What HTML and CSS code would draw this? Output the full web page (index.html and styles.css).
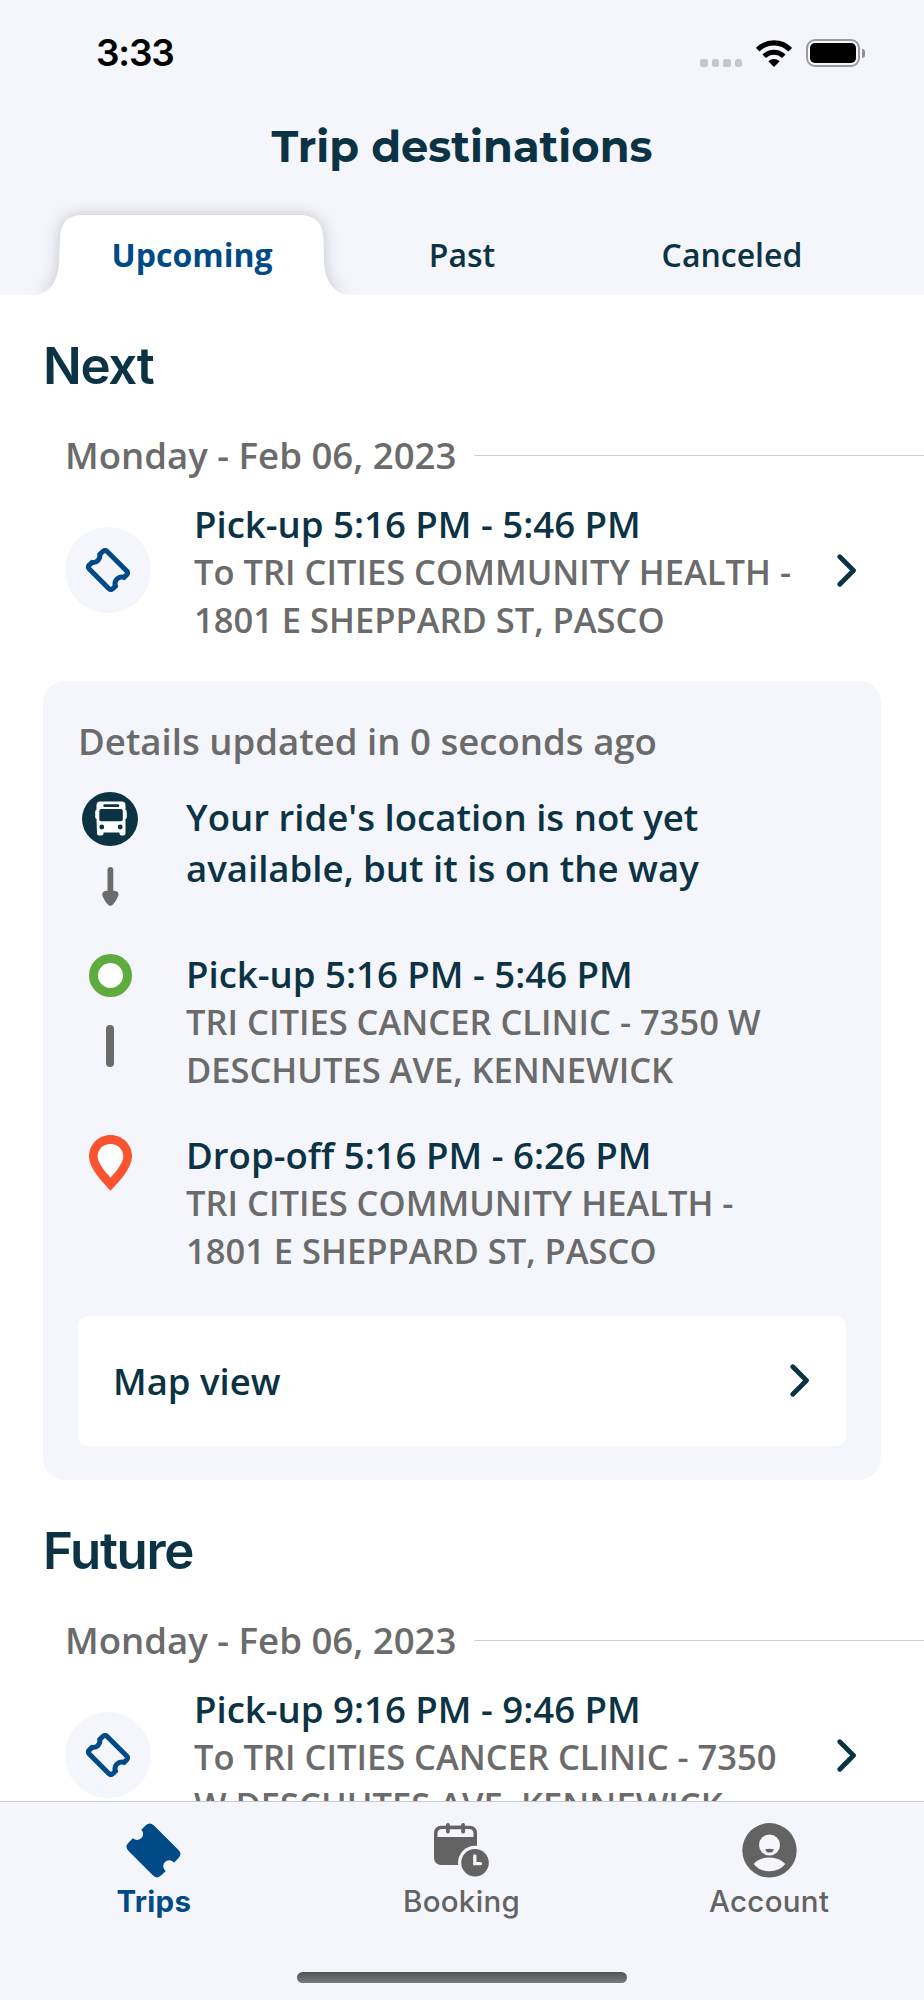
FILE: index.html
```
<!DOCTYPE html>
<html lang="en">
<head>
    <meta charset="UTF-8">
    <meta name="viewport" content="width=device-width, initial-scale=1.0">
    <title>Trip destinations</title>
    <link rel="stylesheet" href="styles.css">
</head>
<body>

<!-- Shared icons -->
<svg class="icon-defs" width="0" height="0">
    <symbol id="icon-ticket" viewBox="0 0 55 55">
        <path d="M17.2 8.2L21 4.4Q23.7 1.8 26.5 4.4L50.6 28.4Q53.2 31 50.6 33.8L47.6 36.8A8.4 8.4 0 0 0 36.8 47.6L33.8 50.6Q31 53.2 28.4 50.6L4.4 26.5Q1.8 23.7 4.4 21L7.6 18A8.4 8.4 0 0 0 17.2 8.2Z" fill="none" stroke="#004b87" stroke-width="6.3"/>
    </symbol>
    <symbol id="icon-chevron" viewBox="0 0 20 33">
        <path d="M2.8 2.8L16.5 16.5L2.8 30.2" fill="none" stroke="#0b3344" stroke-width="4.8" stroke-linecap="round" stroke-linejoin="round"/>
    </symbol>
</svg>

<div class="app">

    <!-- Header -->
    <header class="header">
        <div class="status-bar">
            <span class="clock">3:33</span>
            <div class="status-icons">
                <div class="signal"><i></i><i></i><i></i><i></i></div>
                <svg class="wifi" width="36" height="27" viewBox="0 0 36 27">
                    <path d="M1.7 9.7A22.8 22.8 0 0 1 34.3 9.7" fill="none" stroke="#000" stroke-width="5.2"/>
                    <path d="M8.2 16.3A13.8 13.8 0 0 1 27.8 16.3" fill="none" stroke="#000" stroke-width="5"/>
                    <path d="M18 27L12.3 21.3Q18 16.6 23.7 21.3Z"/>
                </svg>
                <div class="battery"><div class="battery-level"></div></div>
                <div class="battery-cap"></div>
            </div>
        </div>
        <h1>Trip destinations</h1>
        <nav class="tabs">
            <a class="tab active">
                <svg class="tab-shape" width="354" height="110" viewBox="15 185 354 110">
                    <path d="M33 295C50 294.5 58 281 59 262L60 240C60.500 222 68 215 84 215H298C315 215 323 222 323.500 240L324 262C325 281 334 294.500 350 295Z" fill="#fff"/>
                </svg>
                <span>Upcoming</span>
            </a>
            <a class="tab">Past</a>
            <a class="tab">Canceled</a>
        </nav>
    </header>

    <!-- Trips list -->
    <main class="content">
        <section class="section">
            <h2>Next</h2>
            <div class="date"><span>Monday - Feb 06, 2023</span></div>
            <div class="trip">
                <div class="trip-icon"><svg width="44" height="44"><use href="#icon-ticket"/></svg></div>
                <div class="trip-text">
                    <p class="time">Pick-up 5:16 PM - 5:46 PM</p>
                    <p class="address">To TRI CITIES COMMUNITY HEALTH -<br>1801 E SHEPPARD ST, PASCO</p>
                </div>
                <svg class="chevron" width="20" height="33"><use href="#icon-chevron"/></svg>
            </div>

            <div class="details">
                <p class="updated">Details updated in 0 seconds ago</p>
                <div class="step step-ride">
                    <div class="step-icon">
                        <svg width="56" height="54" viewBox="0 0 56 54">
                            <ellipse cx="28" cy="27" rx="28" ry="27" fill="#0b3344"/>
                            <path d="M18 9.500H40Q43.300 9.500 43.500 13V17.500Q44.800 18 44.800 20V25Q44.800 26.500 43.500 27V41.500Q43.500 43.500 41.500 43.500H39.500Q37.500 43.500 37.500 41.500V40.500H21.500V41.500Q21.500 43.500 19.500 43.500H17Q15 43.500 15 41.500L14.500 27Q13.200 26.500 13.200 25V20Q13.200 18 14.500 17.500V13Q14.700 9.500 18 9.500Z" fill="#fff"/>
                            <rect x="21.300" y="12.300" width="16" height="2.700" rx="1.300" fill="#0b3344"/>
                            <rect x="17.300" y="17" width="23.500" height="12.200" rx="2" fill="#0b3344"/>
                            <circle cx="19.800" cy="35" r="2.400" fill="#0b3344"/>
                            <circle cx="38.200" cy="35" r="2.400" fill="#0b3344"/>
                        </svg>
                        <svg class="arrow" width="17" height="39" viewBox="0 0 17 39">
                            <rect x="5.500" y="0" width="5.800" height="28" rx="2.900" fill="#6b6b6b"/>
                            <path d="M4 23.800H12.600Q17.500 24.500 16.300 29Q14 34 11.200 37.300Q8.400 40.300 5.600 37.300Q2.500 34 .5 29Q-.7 24.500 4 23.800Z" fill="#6b6b6b"/>
                        </svg>
                    </div>
                    <p class="ride-status">Your ride's location is not yet<br>available, but it is on the way</p>
                </div>
                <div class="step">
                    <div class="step-icon">
                        <div class="ring"></div>
                        <div class="bar"></div>
                    </div>
                    <div class="step-text">
                        <p class="time">Pick-up 5:16 PM - 5:46 PM</p>
                        <p class="address">TRI CITIES CANCER CLINIC - 7350 W<br>DESCHUTES AVE, KENNEWICK</p>
                    </div>
                </div>
                <div class="step">
                    <div class="step-icon">
                        <svg width="43" height="56" viewBox="0 0 43 56">
                            <path d="M21.500 0C33.500 0 43 9.500 43 21.500C43 32 32 45 21.500 55.700C11 45 0 32 0 21.500C0 9.500 9.500 0 21.500 0Z" fill="#f9532f"/>
                            <path d="M21.500 9C28.700 9 34.300 14.300 34.300 21.500C34.300 27.500 27.500 36 21.500 42.700C15.500 36 8.600 27.500 8.600 21.500C8.600 14.300 14.300 9 21.500 9Z" fill="#fff"/>
                        </svg>
                    </div>
                    <div class="step-text">
                        <p class="time">Drop-off 5:16 PM - 6:26 PM</p>
                        <p class="address">TRI CITIES COMMUNITY HEALTH -<br>1801 E SHEPPARD ST, PASCO</p>
                    </div>
                </div>
                <div class="map-view">
                    <span>Map view</span>
                    <svg class="chevron" width="20" height="33"><use href="#icon-chevron"/></svg>
                </div>
            </div>
        </section>

        <section class="section">
            <h2>Future</h2>
            <div class="date"><span>Monday - Feb 06, 2023</span></div>
            <div class="trip">
                <div class="trip-icon"><svg width="44" height="44"><use href="#icon-ticket"/></svg></div>
                <div class="trip-text">
                    <p class="time">Pick-up 9:16 PM - 9:46 PM</p>
                    <p class="address">To TRI CITIES CANCER CLINIC - 7350<br>W DESCHUTES AVE, KENNEWICK</p>
                </div>
                <svg class="chevron" width="20" height="33"><use href="#icon-chevron"/></svg>
            </div>
        </section>
    </main>

    <!-- Bottom navigation -->
    <footer class="bottom-bar">
        <nav class="bottom-nav">
            <a class="nav-item active">
                <svg width="55" height="55" viewBox="0 0 55 55">
                    <path d="M15.300 6.700L19.500 2.500Q23.700 -1.700 28 2.500L52.300 26.800Q56.600 31 52.300 35.300L48 39.800A5.900 5.900 0 1 0 39.800 48L35.300 52.300Q31 56.600 26.800 52.300L2.600 28Q-1.700 23.700 2.600 19.400L7 15.200A5.900 5.900 0 1 0 15.300 6.700Z" fill="#004b87"/>
                </svg>
                <span>Trips</span>
            </a>
            <a class="nav-item">
                <svg width="55" height="55" viewBox="0 0 55 55">
                    <rect y="2.700" width="43" height="39.300" rx="7" fill="#636363"/>
                    <path d="M3.500 14V10.500Q3.500 6 8 6H35Q39.500 6 39.500 10.500V14Z" fill="#f5f6fc"/>
                    <rect x="12" y="0" width="3.800" height="10.500" rx="1.800" fill="#636363"/>
                    <rect x="27.200" y="0" width="3.800" height="10.500" rx="1.800" fill="#636363"/>
                    <path d="M13.500 4.500H29.500" stroke="#636363" stroke-width="3.500"/>
                    <circle cx="41" cy="39.800" r="17" fill="#f5f6fc"/>
                    <circle cx="41" cy="39.800" r="13.800" fill="#636363"/>
                    <path d="M40.800 33V40.600H46.500" fill="none" stroke="#f5f6fc" stroke-width="3.300" stroke-linecap="round"/>
                </svg>
                <span>Booking</span>
            </a>
            <a class="nav-item">
                <svg width="55" height="55" viewBox="0 0 55 55">
                    <circle cx="27.500" cy="27.300" r="27.200" fill="#636363"/>
                    <circle cx="27.500" cy="22" r="10.500" fill="#f5f6fc"/>
                    <path d="M23 26.500Q27.500 25 32 26.500Q31 29.600 27.500 29.600Q24 29.600 23 26.500Z" fill="#636363"/>
                    <path d="M11.700 41Q17.500 34.500 27.500 34.500T43.300 41Q37.500 48.300 27.500 48.300T11.700 41Z" fill="#f5f6fc"/>
                </svg>
                <span>Account</span>
            </a>
        </nav>
        <div class="home-indicator"></div>
    </footer>
</div>

</body>
</html>
```

FILE: styles.css
```
* {
    box-sizing: border-box;
}

body {
    margin: 0;
    font-family: "Open Sans", "Noto Sans", sans-serif;
    font-weight: 600;
    color: #0b3344;
    background-color: #fff;
}

h1, h2, p {
    margin: 0;
}

svg {
    display: block;
    flex-shrink: 0;
}

.icon-defs {
    position: absolute;
}

.app {
    display: flex;
    flex-direction: column;
    height: 2000px;
    overflow: hidden;
}

/* Header */
.header {
    flex-shrink: 0;
    height: 294.5px;
    background-color: #f5f6fc;
}

.status-bar {
    display: flex;
    justify-content: space-between;
    align-items: center;
    height: 106px;
    padding: 0 59px 0 96px;
}

.clock {
    font-family: Inter, sans-serif;
    font-size: 37px;
    font-weight: 600;
    line-height: 106px;
    letter-spacing: -1.2px;
    color: #000;
}

.status-icons {
    display: flex;
    align-items: center;
    height: 28px;
}

.signal {
    display: flex;
    gap: 4px;
    align-self: flex-end;
    margin-right: 14px;
}

.signal i {
    width: 7.5px;
    height: 8px;
    border-radius: 2.5px;
    background-color: #c6c7cb;
}

.wifi {
    margin-right: 14px;
}

.battery {
    width: 54px;
    height: 28px;
    padding: 2px;
    border: 2px solid #9b9ca0;
    border-radius: 9px;
}

.battery-level {
    height: 100%;
    border-radius: 5px;
    background-color: #000;
}

.battery-cap {
    width: 3px;
    height: 9px;
    margin-left: 2px;
    border-radius: 0 3px 3px 0;
    background-color: #8e8f92;
}

h1 {
    height: 82px;
    font-family: Montserrat, Inter, sans-serif;
    font-size: 43.2px;
    font-weight: 700;
    line-height: 82px;
    text-align: center;
}

.tabs {
    display: grid;
    grid-template-columns: repeat(3, 270px);
    justify-content: center;
    padding-top: 27px;
}

.tab {
    position: relative;
    height: 79.5px;
    font-size: 32px;
    line-height: 79.5px;
    text-align: center;
}

.tab.active {
    font-weight: 700;
    color: #004b87;
}

.tab.active span {
    position: relative;
}

.tab-shape {
    position: absolute;
    left: -42px;
    top: -30px;
    filter: drop-shadow(0 0 8px rgba(0, 0, 0, 0.2));
}

/* Trips list */
.content {
    position: relative;
    flex: 1;
    min-height: 0;
    overflow: hidden;
    background-color: #fff;
}

.section {
    padding-top: 40px;
}

.section + .section {
    padding-top: 39.5px;
}

h2 {
    padding-left: 43px;
    font-family: Inter, sans-serif;
    font-size: 51px;
    font-weight: 600;
    line-height: 62px;
    letter-spacing: -1.3px;
}

.date {
    display: flex;
    align-items: center;
    gap: 18px;
    margin-top: 33.5px;
    padding-left: 65px;
    font-size: 36.6px;
    line-height: 50px;
    color: #6b6b6b;
}

.date::after {
    content: "";
    flex: 1;
    height: 1px;
    background-color: #d0d0d0;
}

.trip {
    display: flex;
    align-items: center;
    margin-top: 18.5px;
    padding: 0 67px 0 65px;
}

.trip-icon {
    display: flex;
    justify-content: center;
    align-items: center;
    width: 86px;
    height: 86px;
    margin-bottom: 1px;
    border-radius: 50%;
    background-color: #f5f6fc;
}

.trip-text {
    flex: 1;
    margin-left: 43px;
    padding-top: 1px;
    white-space: nowrap;
}

.time {
    font-size: 36.6px;
    line-height: 48.5px;
}

.address {
    font-size: 34.5px;
    line-height: 47.5px;
    color: #6b6b6b;
}

/* Ride details */
.details {
    margin: 37.5px 43px 0;
    padding: 35.5px 35px 34.5px;
    border-radius: 22px;
    background-color: #f5f6fc;
}

.updated {
    font-size: 36.6px;
    line-height: 50px;
    color: #6b6b6b;
}

.step {
    display: flex;
    min-height: 143.5px;
    margin-bottom: 37.5px;
}

.step-ride {
    min-height: 120px;
    margin-top: 26px;
}

.step-icon {
    display: flex;
    flex-direction: column;
    align-items: center;
    width: 64px;
    margin-right: 44px;
    padding-top: 4px;
}

.step-ride .step-icon {
    padding-top: 0;
}

.arrow {
    margin-top: 21px;
}

.ride-status {
    font-size: 36.6px;
    line-height: 50.5px;
}

.ring {
    width: 43px;
    height: 43px;
    border: 9px solid #5eac40;
    border-radius: 50%;
    background-color: #fff;
}

.bar {
    width: 8.5px;
    height: 42px;
    margin-top: 28px;
    border-radius: 4px;
    background-color: #6b6b6b;
}

.map-view {
    display: flex;
    justify-content: space-between;
    align-items: center;
    height: 129.5px;
    margin-top: 42px;
    padding: 0 36px 0 35px;
    border-radius: 10px;
    font-size: 36.5px;
    background-color: #fff;
}

/* Bottom navigation */
.bottom-bar {
    flex-shrink: 0;
    height: 199px;
    border-top: 1px solid #c9cacd;
    background-color: #f5f6fc;
}

.bottom-nav {
    display: grid;
    grid-template-columns: repeat(3, 1fr);
    height: 170px;
    padding: 20.5px 1px 0 0;
}

.nav-item {
    display: flex;
    flex-direction: column;
    align-items: center;
    gap: 5px;
    font-family: Inter, sans-serif;
    font-size: 29.5px;
    font-weight: 500;
    line-height: 36px;
    letter-spacing: 0.3px;
    color: #636363;
}

.nav-item.active {
    font-weight: 700;
    color: #004b87;
}

.home-indicator {
    width: 330px;
    height: 11px;
    margin: 0 auto;
    border-radius: 6px;
    background: linear-gradient(#525355, #7a7b7d);
}
```
